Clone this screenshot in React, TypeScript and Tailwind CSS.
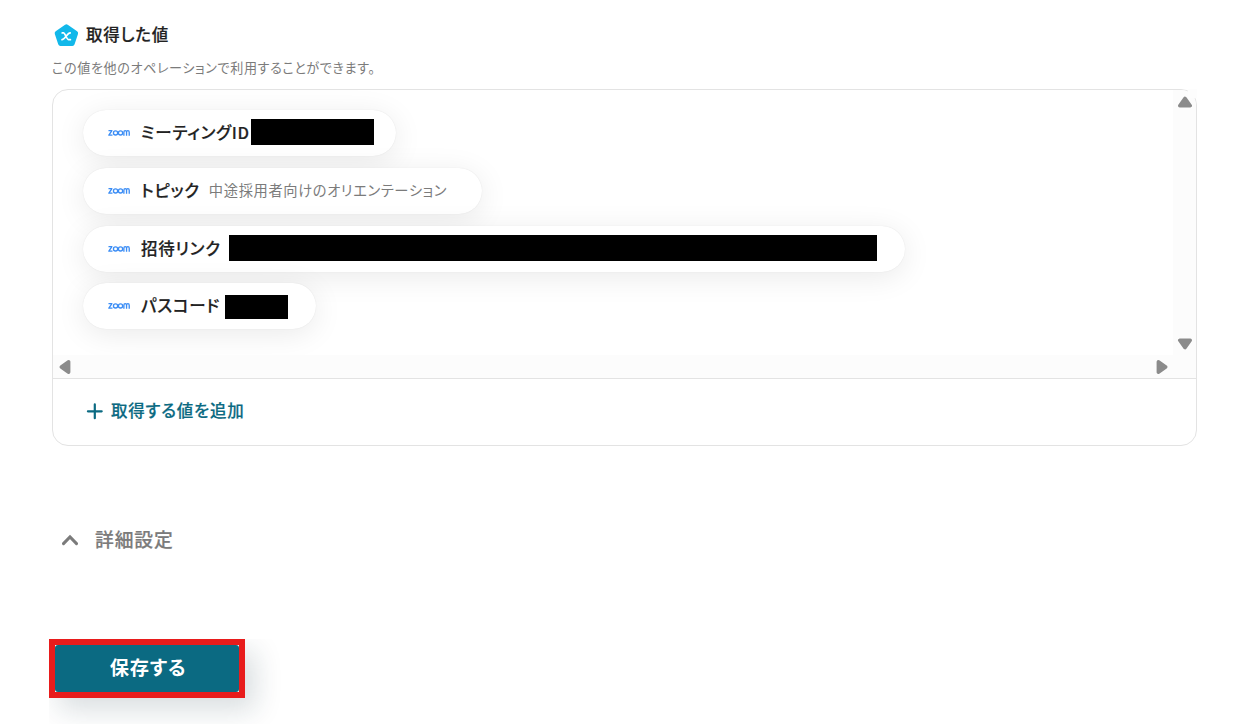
import React from 'react';

interface OutputValue {
  label: string;
  pill: string;
  text?: string;
  mask?: string;
}

const values: OutputValue[] = [
  { label: 'ミーティングID', pill: 'w-[313px]', mask: 'left-[168.5px] top-[9px] w-[123px] h-[26px]' },
  { label: 'トピック', pill: 'w-[399px]', text: '中途採用者向けのオリエンテーション' },
  { label: '招待リンク', pill: 'w-[822px]', mask: 'left-[146.5px] top-[9px] w-[648px] h-[26px]' },
  { label: 'パスコード', pill: 'w-[233px]', mask: 'left-[142.5px] top-[12px] w-[63px] h-[24px]' },
];

const PentagonIcon: React.FC = () => (
  <svg width="26" height="24" viewBox="0 0 26 24" className="shrink-0">
    <path
      d="M13.4 3.6 L22.8 10.2 L19.4 20.6 H7.4 L4 10.2 Z"
      fill="#12b8ea"
      stroke="#12b8ea"
      strokeWidth="4.6"
      strokeLinejoin="round"
    />
    <path
      d="M9.2 9.9 H10.6 C11.9 9.9 14 16.7 15.6 16.7 H17.4 M17.2 9.9 C15.6 9.9 14.4 11.6 13.1 13.3 C11.8 15 10.6 16.7 9 16.7"
      fill="none"
      stroke="white"
      strokeWidth="1.7"
      strokeLinecap="round"
    />
  </svg>
);

const ZoomLogo: React.FC = () => (
  <svg width="22" height="8" viewBox="0 0 23 8" className="shrink-0" fill="none" stroke="#3b8df5" strokeWidth="1.4">
    <path d="M0.5 1.5 H4.1 L0.9 6.2 H4.7" strokeLinejoin="round" />
    <circle cx="7.9" cy="3.9" r="2.2" />
    <circle cx="13.1" cy="3.9" r="2.2" />
    <path d="M16.6 6.8 V3.4 C16.6 1 19.4 1 19.4 3.4 V6.8 M19.4 3.4 C19.4 1 22.2 1 22.2 3.4 V6.8" />
  </svg>
);

const Arrow: React.FC<{ className?: string }> = ({ className }) => (
  <svg width="16" height="12" viewBox="0 0 16 12" className={className}>
    <path d="M8 2.3 L13.3 9.7 H2.7 Z" fill="#8b8b8b" stroke="#8b8b8b" strokeWidth="3.4" strokeLinejoin="round" />
  </svg>
);

const ValuePill: React.FC<{ value: OutputValue }> = ({ value }) => (
  <div
    className={`relative flex h-[46px] items-center rounded-full bg-white pl-[25.5px] shadow-[0_5px_30px_rgba(0,0,0,0.085),0_0_1px_rgba(0,0,0,0.12)] ${value.pill}`}
  >
    <ZoomLogo />
    <span className="-mt-0.5 ml-[11px] whitespace-nowrap text-[16.5px] font-medium leading-6 text-[#222] [-webkit-text-stroke:0.2px]">
      {value.label}
    </span>
    {value.text && (
      <span className="-mt-0.5 ml-[9px] whitespace-nowrap text-[14.25px] leading-6 text-[#7b7b7b]">{value.text}</span>
    )}
    {value.mask && <span className={`absolute bg-black ${value.mask}`} />}
  </div>
);

export default function App() {
  return (
    <div className="h-[724px] w-[1254px] overflow-hidden bg-white pl-[52px] pt-[23px] font-['Noto_Sans_CJK_JP',sans-serif] [font-feature-settings:'palt'] **:tracking-[0.045em]">
      <div className="flex h-6 items-center gap-[7px] pl-px">
        <PentagonIcon />
        <h2 className="-mt-0.5 text-[16.5px] font-medium leading-6 text-[#222] [-webkit-text-stroke:0.2px]">取得した値</h2>
      </div>
      <p className="mt-[11px] h-5 whitespace-nowrap text-[13.1px] leading-5 text-[#7b7b7b]">
        この値を他のオペレーションで利用することができます。
      </p>

      {/* Value list */}
      <div className="relative mt-[11px] w-[1145px]">
        <section className="h-[357px] overflow-hidden rounded-2xl border border-[#e3e3e3]">
          <div className="flex h-[265px]">
            <div className="flex flex-1 flex-col gap-[11.6px] overflow-hidden pl-[29.5px] pt-[20.4px]">
              {values.map((value) => (
                <ValuePill key={value.label} value={value} />
              ))}
            </div>
            <div className="flex w-[23px] flex-col items-center justify-between bg-[#fcfcfc] pb-[5px] pt-[6px]">
              <Arrow />
              <Arrow className="rotate-180" />
            </div>
          </div>
          <div className="flex h-[23px] items-center justify-between bg-[#fcfcfc] pl-[3.5px] pr-[26.5px]">
            <Arrow className="-rotate-90" />
            <Arrow className="rotate-90" />
          </div>
          <button className="flex h-[67px] w-full items-center border-t border-[#e3e3e3] pl-[33px] text-[#0b6a82]">
            <svg width="18" height="18" viewBox="0 0 18 18" stroke="currentColor" strokeWidth="2.2" className="-mt-0.5">
              <path d="M8.8 2.4 V16.2 M1.9 9.3 H15.7" strokeLinecap="round" />
            </svg>
            <span className="-mt-1 ml-[7px] text-[16.5px] font-medium leading-6 [-webkit-text-stroke:0.2px]">
              取得する値を追加
            </span>
          </button>
        </section>
        {/* Scrollbar track squares off the rounded corner */}
        <span className="absolute right-0 top-0 h-[9px] w-[9px] bg-[#fdfdfd]" />
      </div>

      {/* Advanced settings */}
      <button className="mt-20 flex h-7 items-center pl-[10px] text-[#7b7b7b]">
        <svg width="16" height="12" viewBox="0 0 16 12" fill="none" stroke="currentColor" strokeWidth="3">
          <path d="M1.5 9.6 L8 3 L14.5 9.6" strokeLinecap="round" />
        </svg>
        <span className="-mt-0.5 ml-[17px] text-[18.8px] font-medium leading-7 [-webkit-text-stroke:0.2px]">詳細設定</span>
      </button>

      {/* Save */}
      <div className="-ml-[3px] mt-[85px] w-[196px] border-[6px] border-[#e81c1c] bg-white shadow-[10px_12px_28px_rgba(20,50,60,0.16)] [clip-path:inset(0_-60px_-60px_0)]">
        <button className="block h-[47px] w-full rounded-[3px] bg-[#0b6a82] pb-0.5 pl-0.5 text-[19.2px] font-bold leading-[45px] text-white">
          保存する
        </button>
      </div>
    </div>
  );
}
